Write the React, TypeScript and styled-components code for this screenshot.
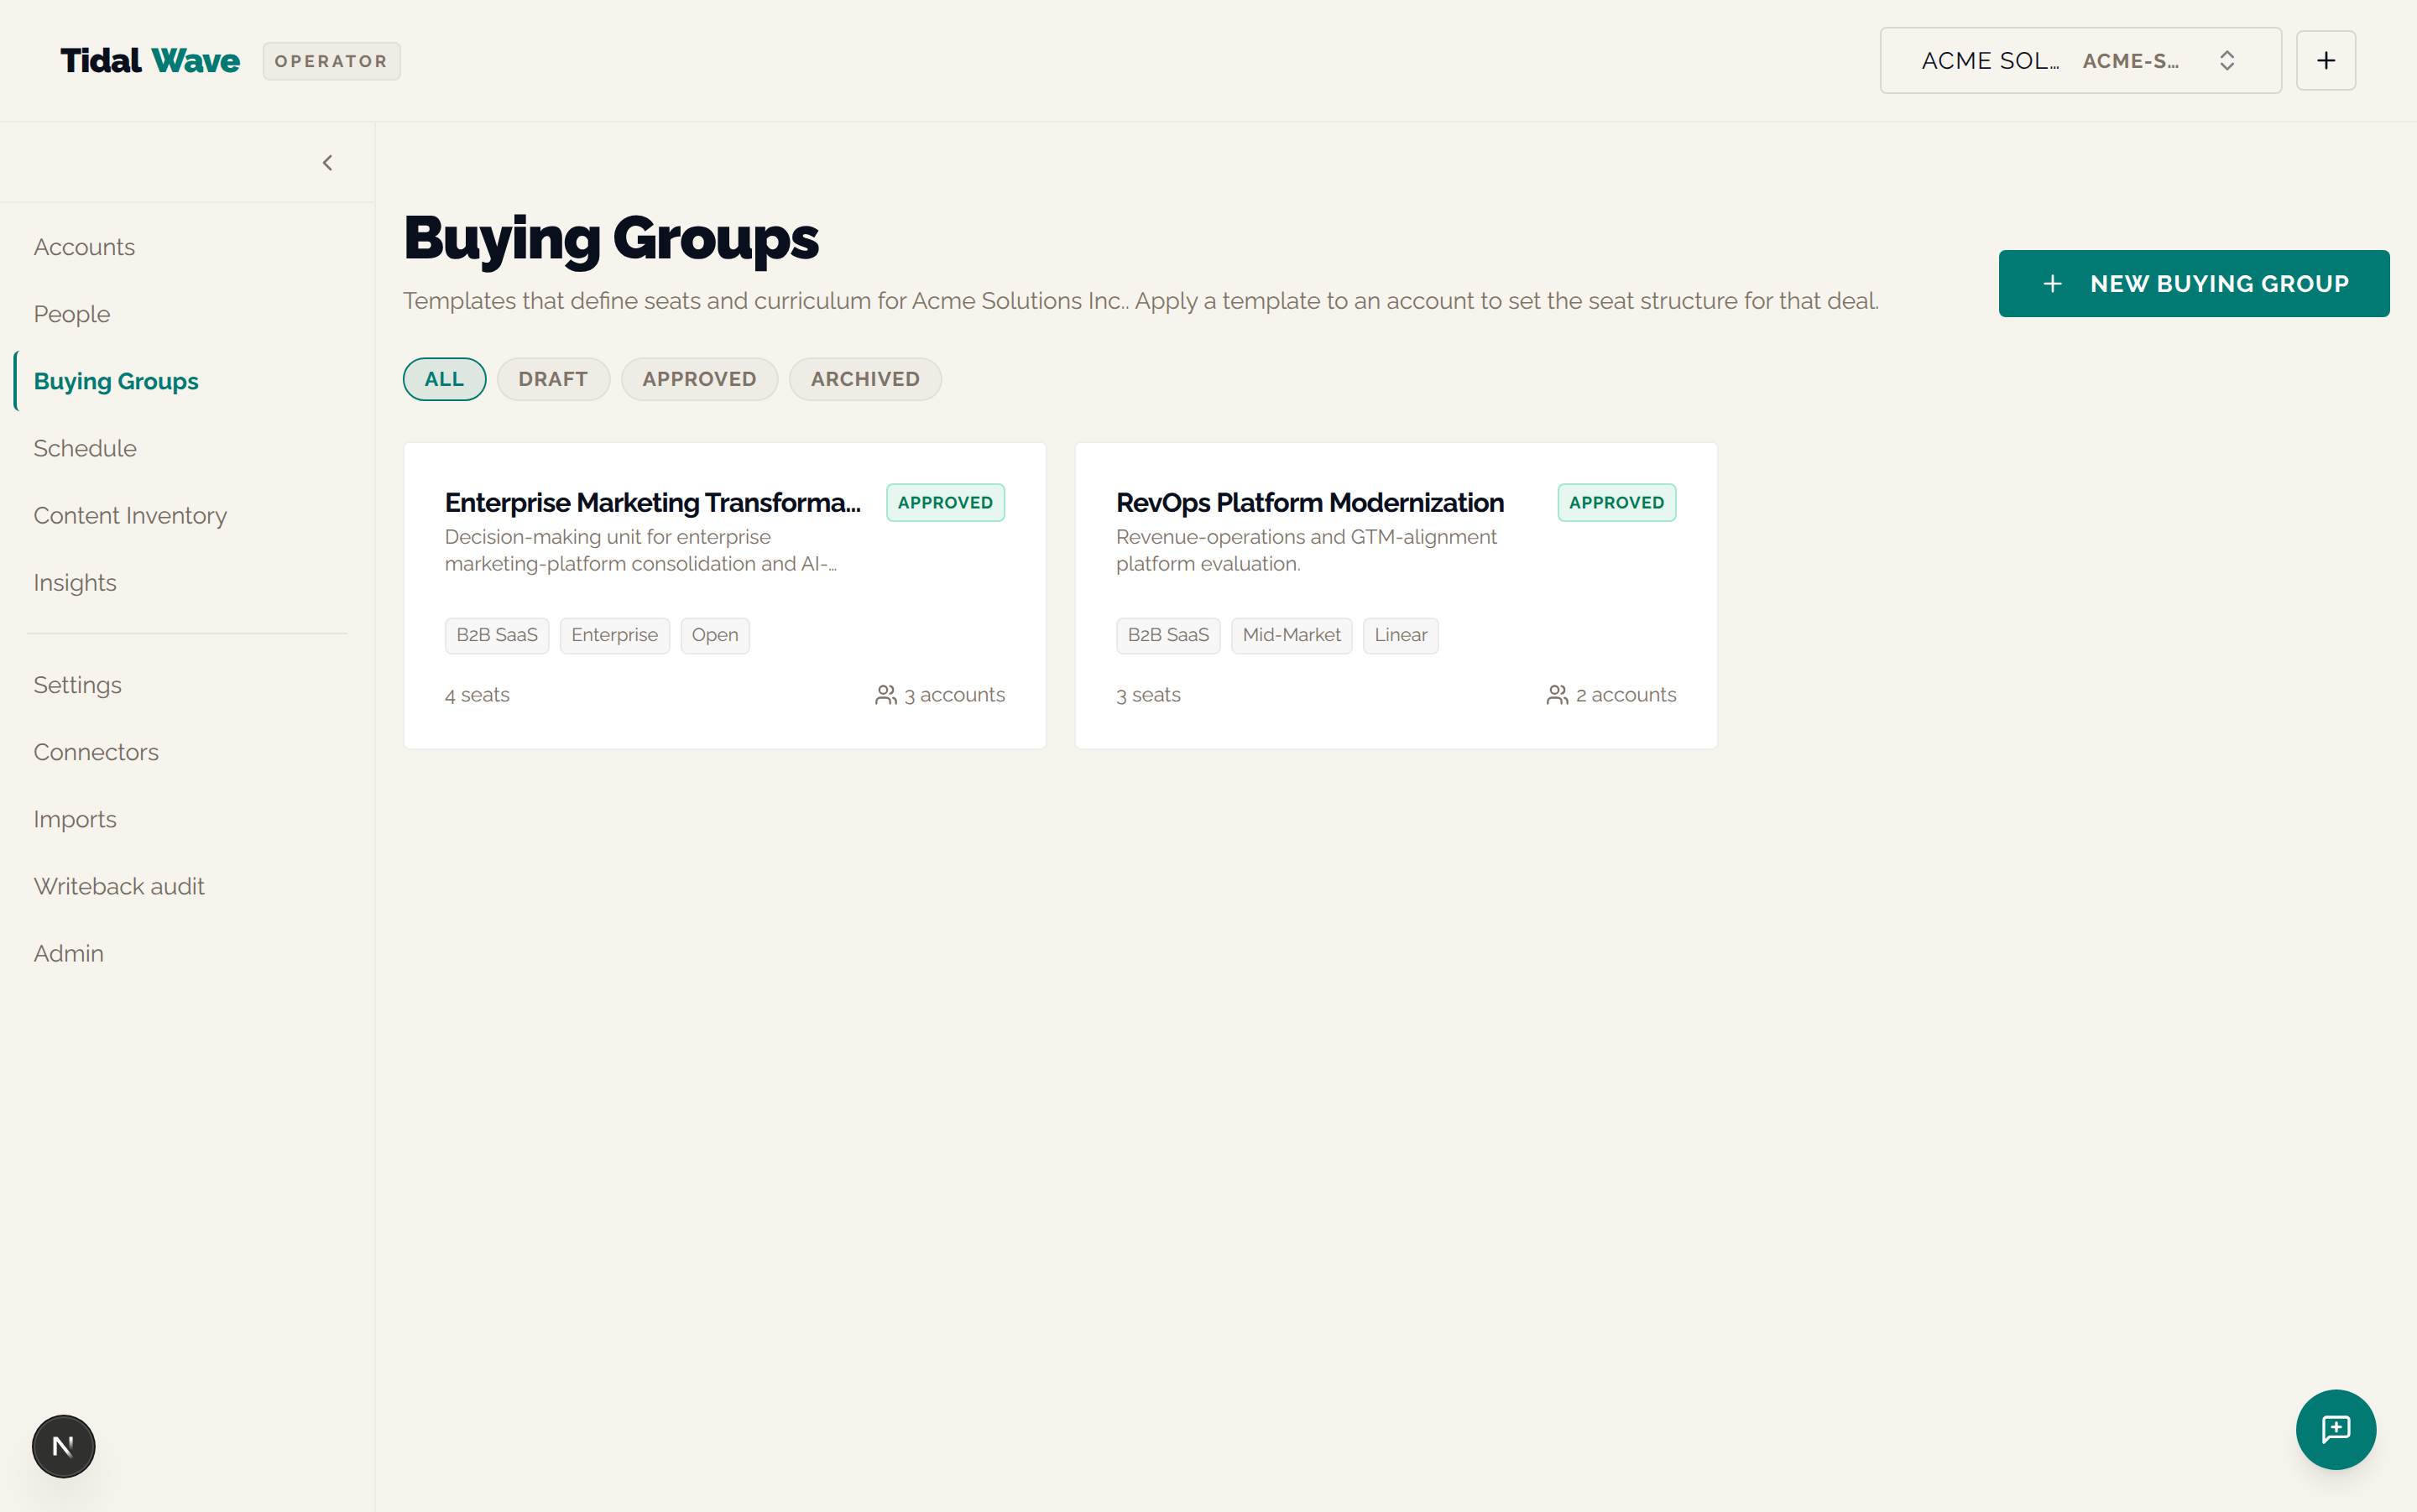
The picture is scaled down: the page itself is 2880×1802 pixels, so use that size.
import React from "react";
import styled, { createGlobalStyle } from "styled-components";

const color = {
  page: "#f7f4ed",
  ink: "#0a0f1e",
  teal: "#007a73",
  muted: "#7e7368",
  nav: "#736a62",
  hairline: "rgba(10, 15, 30, 0.04)",
  outline: "rgba(10, 15, 30, 0.12)",
};

const GlobalStyle = createGlobalStyle`
  *, *::before, *::after { box-sizing: border-box; }
  body {
    margin: 0;
    background: ${color.page};
    color: ${color.ink};
    font-family: Raleway, Lato, sans-serif;
    font-size: 28px;
    text-rendering: geometricPrecision;
    -webkit-font-smoothing: antialiased;
  }
  button { font: inherit; color: inherit; background: none; border: 0; padding: 0; margin: 0; text-rendering: inherit; }
  h1, h2, p { margin: 0; }
`;

const Shell = styled.div`
  display: flex;
  flex-direction: column;
  height: 1802px;
  overflow: hidden;
`;

const Header = styled.header`
  display: flex;
  align-items: center;
  justify-content: space-between;
  height: 146px;
  padding: 0 72px;
  border-bottom: 2px solid ${color.hairline};
  flex: none;
`;

const Brand = styled.div`
  display: flex;
  align-items: center;
  gap: 28px;
  padding-top: 2px;
`;

const Logo = styled.div`
  font-size: 40px;
  font-weight: 900;
  line-height: 56px;
  letter-spacing: -0.025em;
  white-space: nowrap;
`;

const LogoAccent = styled.span`
  margin-left: 5px;
  color: ${color.teal};
`;

const RoleTag = styled.span`
  display: flex;
  align-items: center;
  height: 46px;
  padding: 0 12px;
  border: 2px solid rgba(10, 15, 30, 0.06);
  border-radius: 8px;
  background: rgba(10, 15, 30, 0.03);
  color: ${color.muted};
  font-size: 20px;
  font-weight: 700;
  letter-spacing: 3.9px;
`;

const HeaderActions = styled.div`
  display: flex;
  align-items: center;
  gap: 16px;
`;

const TenantSelect = styled.button`
  display: flex;
  align-items: center;
  width: 480px;
  height: 80px;
  padding: 0 48px;
  border: 2px solid ${color.outline};
  border-radius: 8px;
  letter-spacing: 1.4px;
  white-space: nowrap;
`;

const TenantName = styled.span`
  width: 192px;
  text-align: left;
`;

const TenantSlug = styled.span`
  flex: 1;
  text-align: left;
  color: ${color.muted};
  font-size: 24px;
  font-weight: 700;
`;

const IconButton = styled.button`
  display: flex;
  align-items: center;
  justify-content: center;
  width: 72px;
  height: 72px;
  border: 2px solid ${color.outline};
  border-radius: 8px;
`;

const Body = styled.div`
  display: flex;
  flex: 1;
  min-height: 0;
`;

const Sidebar = styled.aside`
  display: flex;
  flex-direction: column;
  width: 448px;
  border-right: 2px solid ${color.hairline};
  flex: none;
`;

const SidebarTop = styled.div`
  display: flex;
  align-items: center;
  justify-content: flex-end;
  height: 96px;
  padding: 2px 40px 0 0;
  border-bottom: 2px solid ${color.hairline};
  color: ${color.muted};
`;

const Nav = styled.nav`
  display: flex;
  flex-direction: column;
  gap: 8px;
  padding: 16px;
`;

const NavItem = styled.a<{ $active?: boolean }>`
  display: flex;
  align-items: center;
  height: 72px;
  padding-left: 20px;
  border-left: 4px solid ${(p) => (p.$active ? color.teal : "transparent")};
  border-radius: 8px;
  color: ${(p) => (p.$active ? color.teal : color.nav)};
  font-weight: ${(p) => (p.$active ? 700 : 400)};
`;

const NavDivider = styled.hr`
  width: calc(100% - 32px);
  height: 2px;
  margin: 16px 16px;
  border: 0;
  background: rgba(10, 15, 30, 0.065);
`;

const Main = styled.main`
  display: flex;
  flex-direction: column;
  gap: 48px;
  flex: 1;
  min-width: 0;
  padding: 96px 32px 0;
`;

const PageHead = styled.div`
  display: flex;
  align-items: flex-end;
  justify-content: space-between;
  height: 136px;
`;

const Title = styled.h1`
  font-size: 72px;
  font-weight: 900;
  line-height: 80px;
  letter-spacing: -0.025em;
`;

const Subtitle = styled.p`
  margin: 16px 0 -1px;
  color: ${color.muted};
  line-height: 40px;
  white-space: nowrap;
`;

const PrimaryButton = styled.button`
  display: flex;
  align-items: center;
  gap: 29px;
  height: 80px;
  padding: 0 48px;
  border-radius: 8px;
  background: ${color.teal};
  color: #fff;
  font-weight: 700;
  letter-spacing: 0.05em;
  white-space: nowrap;
`;

const Filters = styled.div`
  display: flex;
  gap: 12px;
`;

const Pill = styled.button<{ $active?: boolean }>`
  height: 52px;
  padding: 0 24px;
  border: 2px solid ${(p) => (p.$active ? color.teal : "rgba(10, 15, 30, 0.06)")};
  border-radius: 26px;
  background: ${(p) => (p.$active ? "rgba(0, 122, 115, 0.1)" : "rgba(10, 15, 30, 0.03)")};
  color: ${(p) => (p.$active ? color.teal : color.muted)};
  font-size: 24px;
  font-weight: 700;
  line-height: 32px;
  letter-spacing: 0.05em;
`;

const CardGrid = styled.div`
  display: grid;
  grid-template-columns: repeat(3, 1fr);
  gap: 32px;
`;

const Card = styled.article`
  display: flex;
  flex-direction: column;
  padding: 48px;
  border: 2px solid #efeff0;
  border-radius: 8px;
  background: #fff;
`;

const CardTop = styled.div`
  display: flex;
  align-items: flex-start;
  justify-content: space-between;
  gap: 24px;
`;

const CardText = styled.div`
  flex: 1;
  min-width: 0;
`;

const CardTitle = styled.h2`
  overflow: hidden;
  padding-top: 2px;
  font-size: 32px;
  font-weight: 700;
  line-height: 44px;
  letter-spacing: -0.025em;
  white-space: nowrap;
  text-overflow: ellipsis;
`;

const CardDescription = styled.p`
  margin-top: 2px;
  color: ${color.muted};
  font-size: 24px;
  line-height: 32px;
  white-space: pre-line;
`;

const StatusBadge = styled.span`
  display: flex;
  align-items: center;
  height: 46px;
  padding: 0 12px;
  border: 2px solid #a4e8d1;
  border-radius: 8px;
  background: #e6f7f1;
  color: #047a57;
  font-size: 20px;
  font-weight: 700;
  letter-spacing: 0.05em;
`;

const Tags = styled.div`
  display: flex;
  gap: 12px;
  margin-top: 48px;
`;

const Tag = styled.span`
  display: flex;
  align-items: center;
  height: 44px;
  padding: 0 12px 3px;
  border: 2px solid rgba(10, 15, 30, 0.06);
  border-radius: 8px;
  background: rgba(10, 15, 30, 0.03);
  color: ${color.muted};
  font-size: 22px;
`;

const CardFooter = styled.div`
  display: flex;
  align-items: center;
  justify-content: space-between;
  margin-top: 32px;
  color: ${color.muted};
  font-size: 24px;
  line-height: 32px;
`;

const AccountCount = styled.span`
  display: flex;
  align-items: center;
  gap: 8px;
`;

const FeedbackButton = styled.button`
  position: fixed;
  right: 48px;
  bottom: 50px;
  display: flex;
  align-items: center;
  justify-content: center;
  width: 96px;
  height: 96px;
  border-radius: 50%;
  background: ${color.teal};
  color: #fff;
  box-shadow: 0 20px 30px -6px rgba(10, 15, 30, 0.1), 0 8px 12px -8px rgba(10, 15, 30, 0.1);
`;

const DevBadge = styled.button`
  position: fixed;
  left: 40px;
  bottom: 42px;
  display: flex;
  align-items: center;
  justify-content: center;
  width: 72px;
  height: 72px;
  border-radius: 50%;
  background: #30302e;
  box-shadow: 0 0 0 2px #171717, inset 0 0 0 2px rgba(255, 255, 255, 0.14),
    0 32px 64px -16px rgba(0, 0, 0, 0.24);
`;

const Glyph = styled.svg<{ $size?: number; $faded?: boolean }>`
  flex: none;
  width: ${(p) => p.$size ?? 32}px;
  height: ${(p) => p.$size ?? 32}px;
  opacity: ${(p) => (p.$faded ? 0.5 : 1)};
  fill: none;
  stroke: currentColor;
  stroke-width: 2;
  stroke-linecap: round;
  stroke-linejoin: round;
`;

const Plus = () => (
  <Glyph viewBox="0 0 24 24">
    <path d="M5 12h14M12 5v14" />
  </Glyph>
);

const primaryNav = ["Accounts", "People", "Buying Groups", "Schedule", "Content Inventory", "Insights"];
const secondaryNav = ["Settings", "Connectors", "Imports", "Writeback audit", "Admin"];
const filters = ["ALL", "DRAFT", "APPROVED", "ARCHIVED"];

const groups = [
  {
    title: "Enterprise Marketing Transforma…",
    description: "Decision-making unit for enterprise\nmarketing-platform consolidation and AI-…",
    tags: ["B2B SaaS", "Enterprise", "Open"],
    seats: 4,
    accounts: 3,
  },
  {
    title: "RevOps Platform Modernization",
    description: "Revenue-operations and GTM-alignment\nplatform evaluation.",
    tags: ["B2B SaaS", "Mid-Market", "Linear"],
    seats: 3,
    accounts: 2,
  },
];

const GroupCard = ({ group }: { group: (typeof groups)[number] }) => (
  <Card>
    <CardTop>
      <CardText>
        <CardTitle>{group.title}</CardTitle>
        <CardDescription>{group.description}</CardDescription>
      </CardText>
      <StatusBadge>APPROVED</StatusBadge>
    </CardTop>
    <Tags>
      {group.tags.map((tag) => (
        <Tag key={tag}>{tag}</Tag>
      ))}
    </Tags>
    <CardFooter>
      <span>{group.seats} seats</span>
      <AccountCount>
        <Glyph viewBox="0 0 24 24" $size={28}>
          <path d="M16 21v-2a4 4 0 0 0-4-4H6a4 4 0 0 0-4 4v2" />
          <circle cx="9" cy="7" r="4" />
          <path d="M22 21v-2a4 4 0 0 0-3-3.87M16 3.13a4 4 0 0 1 0 7.75" />
        </Glyph>
        <span>{group.accounts} accounts</span>
      </AccountCount>
    </CardFooter>
  </Card>
);

export default function App() {
  return (
    <>
      <GlobalStyle />
      <Shell>
        <Header>
          <Brand>
            <Logo>
              Tidal <LogoAccent>Wave</LogoAccent>
            </Logo>
            <RoleTag>OPERATOR</RoleTag>
          </Brand>
          <HeaderActions>
            <TenantSelect>
              <TenantName>ACME SOL…</TenantName>
              <TenantSlug>ACME-S…</TenantSlug>
              <Glyph viewBox="0 0 24 24" $faded>
                <path d="m7 15 5 5 5-5M7 9l5-5 5 5" />
              </Glyph>
            </TenantSelect>
            <IconButton>
              <Plus />
            </IconButton>
          </HeaderActions>
        </Header>
        <Body>
          <Sidebar>
            <SidebarTop>
              <Glyph viewBox="0 0 24 24">
                <path d="m15 18-6-6 6-6" />
              </Glyph>
            </SidebarTop>
            <Nav>
              {primaryNav.map((item) => (
                <NavItem key={item} $active={item === "Buying Groups"}>
                  {item}
                </NavItem>
              ))}
              <NavDivider />
              {secondaryNav.map((item) => (
                <NavItem key={item}>{item}</NavItem>
              ))}
            </Nav>
          </Sidebar>
          <Main>
            <PageHead>
              <div>
                <Title>Buying Groups</Title>
                <Subtitle>
                  Templates that define seats and curriculum for Acme Solutions Inc.. Apply a template to an account
                  to set the seat structure for that deal.
                </Subtitle>
              </div>
              <PrimaryButton>
                <Plus />
                NEW BUYING GROUP
              </PrimaryButton>
            </PageHead>
            <Filters>
              {filters.map((filter) => (
                <Pill key={filter} $active={filter === "ALL"}>
                  {filter}
                </Pill>
              ))}
            </Filters>
            <CardGrid>
              {groups.map((group) => (
                <GroupCard key={group.title} group={group} />
              ))}
            </CardGrid>
          </Main>
        </Body>
      </Shell>
      <DevBadge>
        <svg width="40" height="40" viewBox="0 0 20 20" fill="none">
          <defs>
            <linearGradient id="stem" x1="0" y1="4" x2="0" y2="12" gradientUnits="userSpaceOnUse">
              <stop offset="0.2" stopColor="#fff" />
              <stop offset="1" stopColor="#fff" stopOpacity="0" />
            </linearGradient>
            <linearGradient id="diagonal" x1="11" y1="11.5" x2="15.4" y2="17.2" gradientUnits="userSpaceOnUse">
              <stop offset="0.2" stopColor="#fff" />
              <stop offset="1" stopColor="#fff" stopOpacity="0" />
            </linearGradient>
          </defs>
          <path d="M3.8 15.2V4.2h2.5l9.9 12.6-1.6 1.2L5.8 6.7v8.5z" fill="url(#diagonal)" />
          <path d="M13.3 4.2h2v8.2h-2z" fill="url(#stem)" />
        </svg>
      </DevBadge>
      <FeedbackButton>
        <Glyph viewBox="0 0 24 24" $size={40}>
          <path d="M21 15a2 2 0 0 1-2 2H7l-4 4V5a2 2 0 0 1 2-2h14a2 2 0 0 1 2 2zM12 7v6M9 10h6" />
        </Glyph>
      </FeedbackButton>
    </>
  );
}
